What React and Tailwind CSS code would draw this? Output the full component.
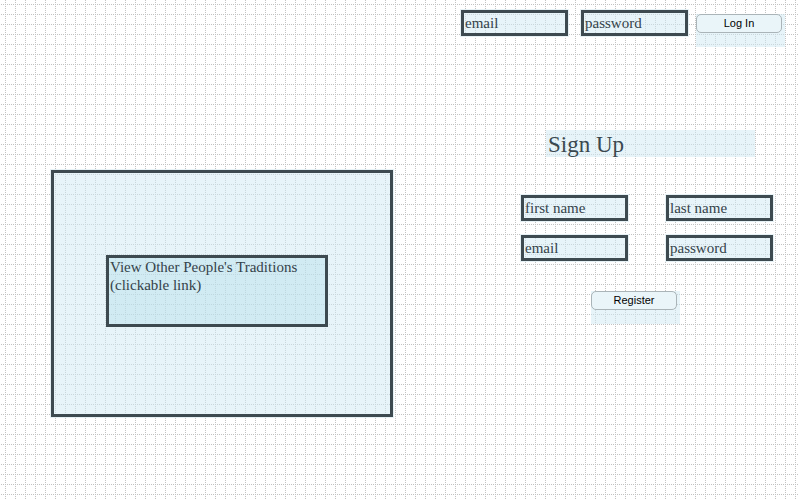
import React from "react";

const serif = "font-['Liberation_Serif','Times_New_Roman',serif]";
const sans = "font-['Liberation_Sans',Arial,sans-serif]";

const GridPaper = () => (
  <svg className="absolute inset-0" width="798" height="500" shapeRendering="crispEdges">
    <defs>
      <pattern id="dots" width="10" height="10" patternUnits="userSpaceOnUse">
        {[0, 2, 4, 6, 8].map((y) => (
          <rect key={"v" + y} x="5" y={y} width="1" height="1" fill="#c2c2c2" />
        ))}
        {[1, 3, 7, 9].map((x) => (
          <rect key={"h" + x} x={x} y="4" width="1" height="1" fill="#c2c2c2" />
        ))}
      </pattern>
    </defs>
    <rect width="798" height="500" fill="url(#dots)" />
  </svg>
);

const Field = ({ text }) => (
  <div
    className={`w-[107px] h-[26px] border-[3px] border-[#3d4a50] bg-[#cfe9f4]/50 shadow-[0_0_0_1px_#e6f1f5] pl-[1px] text-[15px] leading-[20px] text-[#34424a] ${serif}`}
  >
    {text}
  </div>
);

const Button = ({ label }) => (
  <div className="w-[89px] h-[33px] bg-[#cfe9f4]/50">
    <div
      className={`w-[86px] h-[19px] rounded-[5px] border border-[#aab4b8] bg-[#eaf5f9] text-[11px] leading-[17px] text-center text-black ${sans}`}
    >
      {label}
    </div>
  </div>
);

export default function App() {
  return (
    <div className="relative w-[798px] h-[500px] bg-white overflow-hidden">
      <GridPaper />
      <div className="relative">
        {/* top login bar */}
        <div className="flex pt-[10px] pl-[461px]">
          <Field text="email" />
          <div className="ml-[13px]">
            <Field text="password" />
          </div>
          <div className="ml-[8px] mt-[4px]">
            <Button label="Log In" />
          </div>
        </div>

        <div className="flex mt-[83px]">
          {/* left panel */}
          <div className="ml-[51px] mt-[40px] w-[342px] h-[247px] border-[3px] border-[#3d4a50] bg-[#cfe9f4]/50 shadow-[0_0_0_1px_#e6f1f5] pl-[52px] pt-[82px]">
            <div
              className={`w-[222px] h-[72px] border-[3px] border-[#3d4a50] bg-[#a9dbe9]/35 pl-[1px] text-[15px] leading-[18px] text-[#34424a] ${serif}`}
            >
              View Other People's Traditions
              <br />
              (clickable link)
            </div>
          </div>

          {/* sign up */}
          <div className="ml-[128px] flex flex-col">
            <div
              className={`ml-[25px] w-[209px] h-[27px] bg-[#cfe9f4]/50 pl-[2px] text-[23px] leading-[29px] text-[#3a484f] ${serif}`}
            >
              Sign Up
            </div>
            <div className="mt-[38px] grid grid-cols-[107px_107px] gap-x-[38px] gap-y-[14px]">
              <Field text="first name" />
              <Field text="last name" />
              <Field text="email" />
              <Field text="password" />
            </div>
            <div className="mt-[30px] ml-[70px]">
              <Button label="Register" />
            </div>
          </div>
        </div>
      </div>
    </div>
  );
}
